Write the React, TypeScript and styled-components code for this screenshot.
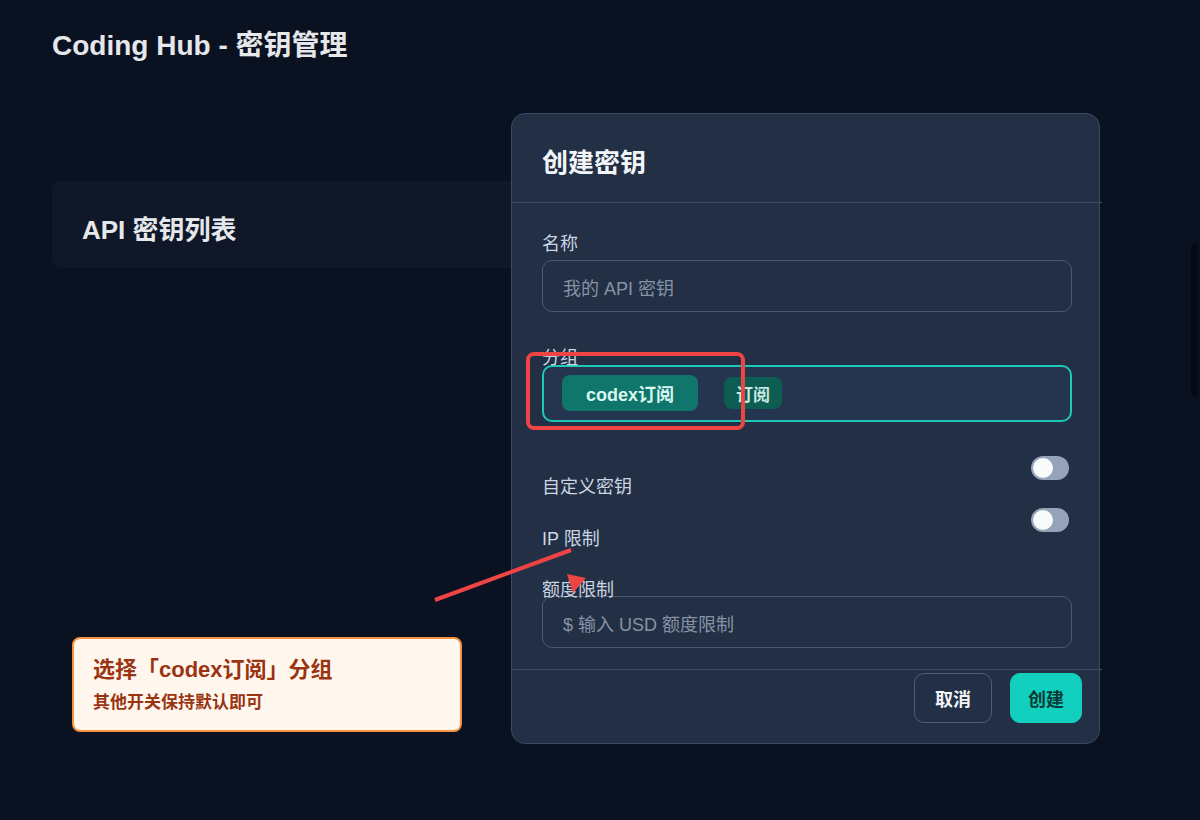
import React from 'react';
import styled, { createGlobalStyle } from 'styled-components';

const GlobalStyle = createGlobalStyle`
  * {
    box-sizing: border-box;
  }
  body {
    margin: 0;
    background: #0a1120;
    font-family: "Liberation Sans", "Noto Sans CJK SC", sans-serif;
    color: #e2e8f0;
  }
`;

const Page = styled.div`
  position: relative;
  width: 1200px;
  height: 820px;
  padding: 28px 52px 0;
  overflow: hidden;
`;

const PageTitle = styled.h1`
  margin: 0;
  font-size: 28px;
  line-height: 36px;
  font-weight: 700;
  color: #e5e7eb;
`;

const ListCard = styled.section`
  display: flex;
  align-items: center;
  width: 900px;
  height: 87px;
  margin-top: 117px;
  padding: 10px 30px 0;
  border-radius: 8px;
  background: #0f1729;
`;

const CardTitle = styled.h2`
  margin: 0;
  font-size: 26px;
  line-height: 32px;
  font-weight: 700;
  color: #e5e7eb;
`;

const ScrollThumb = styled.div`
  position: absolute;
  left: 1191px;
  top: 243px;
  width: 7px;
  height: 153px;
  border-radius: 4px;
  background: #050a14;
`;

/* dialog */

const Dialog = styled.div`
  position: absolute;
  left: 511px;
  top: 113px;
  width: 589px;
  height: 631px;
  display: flex;
  flex-direction: column;
  border: 1px solid #3b4a61;
  border-radius: 14px;
  background: #222f45;
`;

const DialogHeader = styled.header`
  padding: 33px 30px 23px;
`;

const DialogTitle = styled.h3`
  margin: 0;
  font-size: 26px;
  line-height: 32px;
  font-weight: 700;
  color: #f1f5f9;
`;

const Divider = styled.div`
  height: 1px;
  margin-right: -3px;
  background: #3b4a61;
`;

const DialogBody = styled.div`
  flex: 1;
  padding: 30px 27px 21px 30px;
  display: flex;
  flex-direction: column;
`;

const Field = styled.div<{ $top?: number }>`
  margin-top: ${({ $top }) => $top ?? 0}px;
`;

const Label = styled.label<{ $gap?: number }>`
  display: block;
  margin-bottom: ${({ $gap }) => $gap ?? 5}px;
  font-size: 18px;
  line-height: 22px;
  color: #cbd5e1;
`;

const TextInput = styled.input`
  display: block;
  width: 100%;
  height: 52px;
  padding: 7px 20px 0;
  border: 1px solid #4b5a70;
  border-radius: 10px;
  background: transparent;
  font-family: inherit;
  font-size: 18px;
  color: #e2e8f0;
  outline: none;
  &::placeholder {
    color: #8793a5;
  }
`;

const GroupBox = styled.div`
  display: flex;
  align-items: center;
  gap: 26px;
  height: 57px;
  padding: 0 18px;
  border: 2px solid #1cc9b7;
  border-radius: 10px;
  background: #26354f;
`;

const Chip = styled.button<{ $active?: boolean }>`
  height: ${({ $active }) => ($active ? 36 : 32)}px;
  padding: 0 ${({ $active }) => ($active ? 24 : 12)}px;
  border: none;
  border-radius: 8px;
  background: ${({ $active }) => ($active ? '#10766b' : '#0d5d53')};
  color: ${({ $active }) => ($active ? '#d9f7f1' : '#c9e8e1')};
  font-family: inherit;
  font-size: ${({ $active }) => ($active ? 18 : 17)}px;
  font-weight: 700;
`;

const SwitchRow = styled.div<{ $top: number }>`
  display: flex;
  justify-content: space-between;
  align-items: flex-start;
  margin-top: ${({ $top }) => $top}px;
  padding-right: 3px;
`;

const SwitchLabel = styled.span`
  margin-top: 21px;
  font-size: 18px;
  line-height: 20px;
  color: #cbd5e1;
`;

const Switch = styled.span<{ $on?: boolean }>`
  position: relative;
  display: inline-block;
  width: 38px;
  height: 24px;
  border-radius: 12px;
  background: ${({ $on }) => ($on ? '#14cfbd' : '#94a3b8')};
  &::after {
    content: '';
    position: absolute;
    top: 2px;
    left: ${({ $on }) => ($on ? 16 : 2)}px;
    width: 20px;
    height: 20px;
    border-radius: 50%;
    background: #f8fafc;
  }
`;

const DialogFooter = styled.footer`
  display: flex;
  justify-content: flex-end;
  gap: 18px;
  padding: 4px 17px 20px;
`;

const Button = styled.button<{ $primary?: boolean }>`
  height: 50px;
  padding: 0 ${({ $primary }) => ($primary ? 17 : 20)}px;
  border: 1px solid ${({ $primary }) => ($primary ? '#13cfbd' : '#4f5e74')};
  border-radius: 10px;
  background: ${({ $primary }) => ($primary ? '#13cfbd' : 'transparent')};
  color: ${({ $primary }) => ($primary ? '#083b37' : '#f1f5f9')};
  font-family: inherit;
  font-size: 18px;
  font-weight: 700;
`;

/* annotations drawn over the page */

const Highlight = styled.div`
  position: absolute;
  left: 526px;
  top: 352px;
  width: 219px;
  height: 78px;
  border: 4px solid #ef4444;
  border-radius: 8px;
`;

const ArrowLayer = styled.svg`
  position: absolute;
  left: 0;
  top: 0;
  pointer-events: none;
`;

const Callout = styled.div`
  position: absolute;
  left: 72px;
  top: 637px;
  width: 390px;
  height: 95px;
  padding: 17px 19px 0;
  border: 2px solid #f7923f;
  border-radius: 8px;
  background: #fff7ed;
  color: #9a3412;
`;

const CalloutTitle = styled.div`
  font-size: 22px;
  line-height: 28px;
  font-weight: 700;
`;

const CalloutText = styled.div`
  margin-top: 8px;
  font-size: 17px;
  line-height: 22px;
  font-weight: 700;
`;

const App: React.FC = () => {
  return (
    <>
      <GlobalStyle />
      <Page>
        <PageTitle>Coding Hub - 密钥管理</PageTitle>
        <ListCard>
          <CardTitle>API 密钥列表</CardTitle>
        </ListCard>
        <ScrollThumb />

        <Dialog role="dialog">
          <DialogHeader>
            <DialogTitle>创建密钥</DialogTitle>
          </DialogHeader>
          <Divider />
          <DialogBody>
            <Field>
              <Label>名称</Label>
              <TextInput placeholder="我的 API 密钥" />
            </Field>
            <Field $top={35}>
              <Label $gap={-4}>分组</Label>
              <GroupBox>
                <Chip $active>codex订阅</Chip>
                <Chip>订阅</Chip>
              </GroupBox>
            </Field>
            <SwitchRow $top={34}>
              <SwitchLabel>自定义密钥</SwitchLabel>
              <Switch />
            </SwitchRow>
            <SwitchRow $top={11}>
              <SwitchLabel>IP 限制</SwitchLabel>
              <Switch />
            </SwitchRow>
            <Field $top={30}>
              <Label $gap={-5}>额度限制</Label>
              <TextInput placeholder="$ 输入 USD 额度限制" />
            </Field>
          </DialogBody>
          <Divider />
          <DialogFooter>
            <Button>取消</Button>
            <Button $primary>创建</Button>
          </DialogFooter>
        </Dialog>

        <Highlight />
        <ArrowLayer width={1200} height={820} viewBox="0 0 1200 820">
          <line x1={435} y1={600} x2={571} y2={550} stroke="#ef4444" strokeWidth={4} />
          <polygon points="567,574 586,578 573,593" fill="#ef4444" />
        </ArrowLayer>

        <Callout>
          <CalloutTitle>选择「codex订阅」分组</CalloutTitle>
          <CalloutText>其他开关保持默认即可</CalloutText>
        </Callout>
      </Page>
    </>
  );
};

export default App;
